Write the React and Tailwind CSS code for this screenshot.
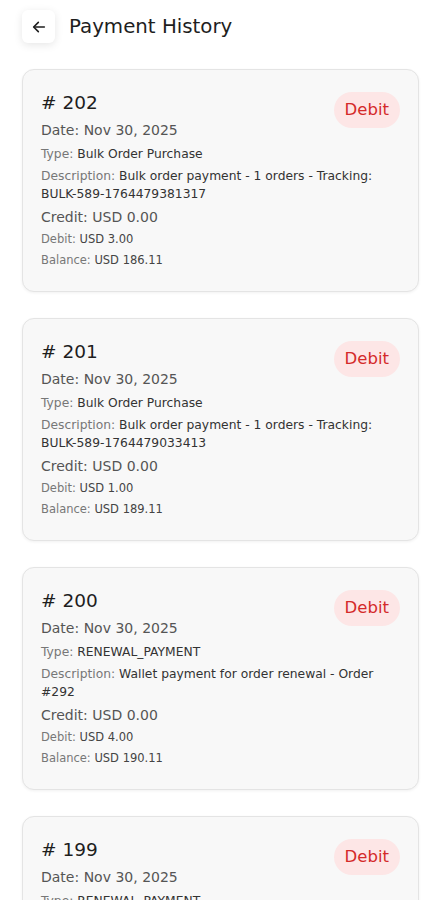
import React from 'react';

const transactions = [
  {
    id: 202,
    date: 'Nov 30, 2025',
    type: 'Bulk Order Purchase',
    description: 'Bulk order payment - 1 orders - Tracking: BULK-589-1764479381317',
    credit: '0.00',
    debit: '3.00',
    balance: '186.11',
  },
  {
    id: 201,
    date: 'Nov 30, 2025',
    type: 'Bulk Order Purchase',
    description: 'Bulk order payment - 1 orders - Tracking: BULK-589-1764479033413',
    credit: '0.00',
    debit: '1.00',
    balance: '189.11',
  },
  {
    id: 200,
    date: 'Nov 30, 2025',
    type: 'RENEWAL_PAYMENT',
    description: 'Wallet payment for order renewal - Order #292',
    credit: '0.00',
    debit: '4.00',
    balance: '190.11',
  },
  {
    id: 199,
    date: 'Nov 30, 2025',
    type: 'RENEWAL_PAYMENT',
    description: 'Wallet payment for order renewal - Order #291',
    credit: '0.00',
    debit: '4.00',
    balance: '194.11',
  },
];

// keep tracking codes like BULK-589-... from breaking at their hyphens
const renderDescription = (text) =>
  text.split(' ').map((word, i) => (
    <React.Fragment key={i}>
      {i > 0 && ' '}
      {word.includes('-') && word.length > 1 ? <span className="whitespace-nowrap">{word}</span> : word}
    </React.Fragment>
  ));

const TransactionCard = ({ tx }) => (
  <div className="mx-[22px] rounded-[12px] border border-[#e4e4e4] bg-[#f8f8f8] px-[18px] pt-[19px] pb-[22px] shadow-[0_1px_3px_rgba(0,0,0,0.06)]">
    <div className="flex h-[28px] items-start justify-between">
      <h3 className="text-[18.5px] leading-[28px] text-[#1e1e1e]"># {tx.id}</h3>
      <span className="mt-[3px] flex h-[36px] items-center rounded-full bg-[#fde6e6] px-[11px] text-[16.5px] text-[#d42a2a]">
        Debit
      </span>
    </div>
    <p className="mt-[3px] text-[14px] leading-[20px] text-[#555]">Date: {tx.date}</p>
    <p className="mt-[5px] text-[12.3px] leading-[18px] text-[#777]">
      Type: <span className="text-[#333]">{tx.type}</span>
    </p>
    <p className="mt-[4px] text-[12.3px] leading-[18px] text-[#777]">
      Description: <span className="text-[#333]">{renderDescription(tx.description)}</span>
    </p>
    <p className="mt-[4px] text-[14px] leading-[20px] text-[#555]">Credit: USD {tx.credit}</p>
    <p className="mt-[3px] text-[11.5px] leading-[18px] text-[#777]">
      Debit: <span className="text-[#444]">USD {tx.debit}</span>
    </p>
    <p className="mt-[3px] text-[11.5px] leading-[18px] text-[#777]">
      Balance: <span className="text-[#444]">USD {tx.balance}</span>
    </p>
  </div>
);

const App = () => {
  return (
    <div className="min-h-screen bg-white pb-8" style={{ fontFamily: '"DejaVu Sans", "Open Sans", sans-serif' }}>
      <div className="flex items-center pl-[22px] pt-[10px]">
        <button className="flex h-[33px] w-[33px] items-center justify-center rounded-[6px] bg-white shadow-[0_2px_8px_rgba(0,0,0,0.10)]">
          <svg width="16" height="16" viewBox="0 0 24 24" fill="none" stroke="#1e1e1e" strokeWidth="2.4" strokeLinecap="round" strokeLinejoin="round">
            <path d="M20 12H5" />
            <path d="M11 5l-7 7 7 7" />
          </svg>
        </button>
        <h1 className="ml-[14px] text-[19.8px] text-[#1e1e1e]">Payment History</h1>
      </div>

      <div className="mt-[26px] flex flex-col gap-[26px]">
        {transactions.map(tx => (
          <TransactionCard key={tx.id} tx={tx} />
        ))}
      </div>
    </div>
  );
};

export default App;
